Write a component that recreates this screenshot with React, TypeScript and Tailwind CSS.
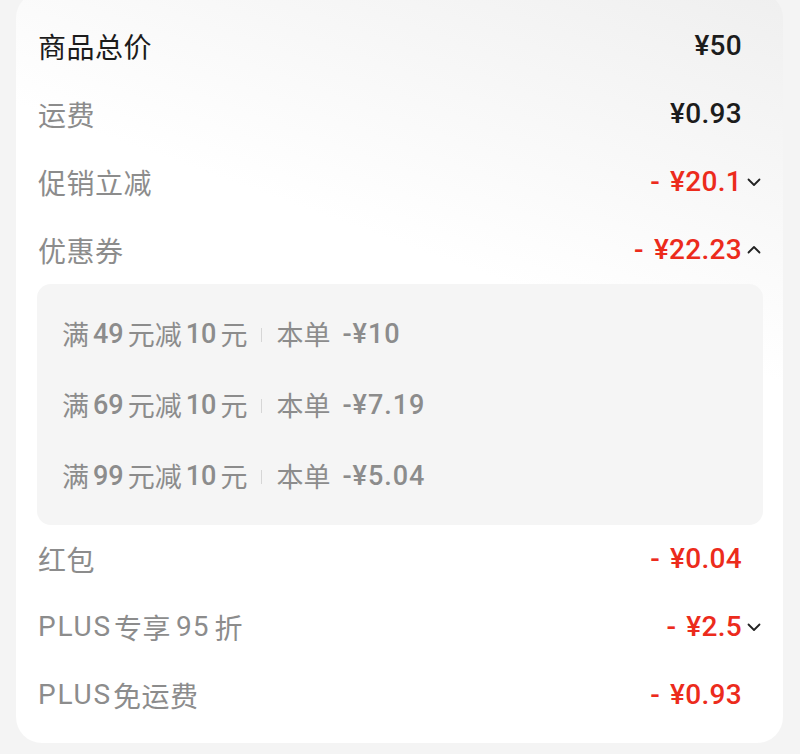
const cjk = "font-['Noto_Sans_CJK_SC',sans-serif]";
const num = "font-['Roboto','Noto_Sans_CJK_SC',sans-serif]";

const Chevron = ({ up }: { up?: boolean }) => (
  <svg width="16" height="16" viewBox="0 0 16 16" className="ml-[4px]">
    <path
      d={up ? "M2.5 10.5 L8 5 L13.5 10.5" : "M2.5 5.5 L8 11 L13.5 5.5"}
      fill="none"
      stroke="#222"
      strokeWidth="1.8"
      strokeLinecap="round"
      strokeLinejoin="round"
    />
  </svg>
);

type Row = {
  label: React.ReactNode;
  key: string;
  value: string;
  red?: boolean;
  dark?: boolean;
  chevron?: "up" | "down";
};

const Plus = () => (
  <span className="font-['Roboto',sans-serif] tracking-[1.8px]">PLUS</span>
);

const LineRow = ({ row }: { row: Row }) => (
  <div className="flex h-[68px] items-center justify-between pl-[22px] pr-[21px]">
    <span
      className={`${cjk} flex items-center text-[28px] tracking-[0.5px] ${row.dark ? "text-[#1c1c1c]" : "text-[#8c8c8c]"}`}
    >
      {row.label}
    </span>
    <div className="flex items-center">
      <span
        className={`${num} flex items-center text-[28px] font-medium tracking-[0.3px] ${row.red ? "text-[#ec2b1c]" : "text-[#1c1c1c]"}`}
      >
        {row.red && <span className="mr-[10px]">-</span>}
        {row.value}
      </span>
      <div className="flex w-[20px] justify-end">
        {row.chevron && <Chevron up={row.chevron === "up"} />}
      </div>
    </div>
  </div>
);

const coupons = [
  { min: "49", cut: "10", save: "-¥10" },
  { min: "69", cut: "10", save: "-¥7.19" },
  { min: "99", cut: "10", save: "-¥5.04" },
];

const topRows: Row[] = [
  { key: "a", label: "商品总价", value: "¥50", dark: true },
  { key: "b", label: "运费", value: "¥0.93" },
  { key: "c", label: "促销立减", value: "¥20.1", red: true, chevron: "down" },
  { key: "d", label: "优惠券", value: "¥22.23", red: true, chevron: "up" },
];

const bottomRows: Row[] = [
  { key: "e", label: "红包", value: "¥0.04", red: true },
  {
    key: "f",
    label: (
      <>
        <Plus />
        <span className="ml-[2px]">专享</span>
        <span className="mx-[5px] font-['Roboto',sans-serif] tracking-[1px]">95</span>
        <span>折</span>
      </>
    ),
    value: "¥2.5",
    red: true,
    chevron: "down",
  },
  {
    key: "g",
    label: (
      <>
        <Plus />
        <span className="ml-[1px]">免运费</span>
      </>
    ),
    value: "¥0.93",
    red: true,
  },
];

export default function App() {
  return (
    <div className="h-[754px] w-[800px] overflow-hidden bg-[#f4f4f4] pl-[16px] pr-[17px]">
      <div className="-mt-[8px] rounded-[26px] bg-[linear-gradient(200deg,#efefef_0%,#ffffff_38%,#ffffff_100%)] pt-[20px] pb-[14px]">
        {topRows.map((r) => (
          <LineRow key={r.key} row={r} />
        ))}

        <div className="ml-[21px] mr-[20px] rounded-[14px] bg-[#f5f5f5] pt-[15px] pb-[13px] pl-[25px]">
          {coupons.map((c) => (
            <div
              key={c.min}
              className="flex h-[71px] items-center text-[27px] text-[#8c8c8c]"
            >
              <span className={cjk}>满</span>
              <span className={`${num} mx-[4px] font-medium`}>{c.min}</span>
              <span className={cjk}>元减</span>
              <span className={`${num} mx-[4px] font-medium`}>{c.cut}</span>
              <span className={cjk}>元</span>
              <span className="mx-[14px] h-[14px] w-px bg-[#d6d6d6]" />
              <span className={cjk}>本单</span>
              <span className={`${num} ml-[12px] font-medium tracking-[1px]`}>
                {c.save}
              </span>
            </div>
          ))}
        </div>

        {bottomRows.map((r) => (
          <LineRow key={r.key} row={r} />
        ))}
      </div>
    </div>
  );
}
